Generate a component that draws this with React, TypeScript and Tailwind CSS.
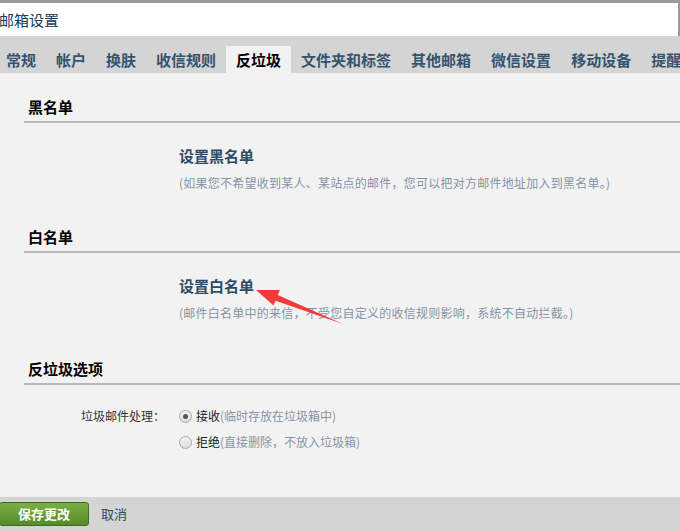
import React from "react";

const tabs = ["常规", "帐户", "换肤", "收信规则", "反垃圾", "文件夹和标签", "其他邮箱", "微信设置", "移动设备", "提醒"];

function Radio({ checked }: { checked?: boolean }) {
  return (
    <span className="w-[13px] h-[13px] rounded-full border border-[#a9a9a9] bg-gradient-to-b from-[#f4f4f4] to-[#dcdcdc] flex items-center justify-center shrink-0">
      {checked && <span className="w-[5px] h-[5px] rounded-full bg-[#555]" />}
    </span>
  );
}

export default function App() {
  const font = { fontFamily: '"Noto Sans CJK SC", "Liberation Sans", sans-serif' };
  return (
    <div className="relative w-[680px] h-[531px] flex flex-col overflow-hidden bg-[#f2f2f2]" style={font}>
      <div className="h-[3px] bg-[#9a9a9a]" />
      <div className="h-[33px] bg-white border-r-2 border-[#9a9a9a] flex items-center">
        <span className="text-[15px] leading-[20px] text-[#1b3a5c] -ml-[1px]">邮箱设置</span>
      </div>
      <div className="h-[37px] bg-[#d4d4d4] flex items-end -ml-[4px] whitespace-nowrap">
        {tabs.map((t) => (
          <div
            key={t}
            className={
              "h-[27px] px-[10px] flex items-center text-[15px] font-bold leading-[20px] " +
              (t === "反垃圾" ? "bg-[#f2f2f2] text-black" : "text-[#34536f]")
            }
          >
            {t}
          </div>
        ))}
      </div>
      <div className="flex-1 pt-[24px]">
        <div className="ml-[24px] pl-[4px] pb-[4px] border-b-2 border-[#b9b9b9] text-[15px] leading-[20px] font-bold text-black">黑名单</div>
        <div className="pl-[179px] mt-[23px]">
          <div className="text-[15px] leading-[20px] font-bold text-[#2c4b69]">设置黑名单</div>
          <div className="mt-[7px] text-[12px] leading-[20px] tracking-[0.25px] text-[#8494a6] whitespace-nowrap">(如果您不希望收到某人、某站点的邮件，您可以把对方邮件地址加入到黑名单。)</div>
        </div>
        <div className="mt-[34px] ml-[24px] pl-[4px] pb-[4px] border-b-2 border-[#b9b9b9] text-[15px] leading-[20px] font-bold text-black">白名单</div>
        <div className="pl-[179px] mt-[23px]">
          <div className="text-[15px] leading-[20px] font-bold text-[#2c4b69]">设置白名单</div>
          <div className="mt-[7px] text-[12px] leading-[20px] tracking-[0.25px] text-[#8494a6] whitespace-nowrap">(邮件白名单中的来信，不受您自定义的收信规则影响，系统不自动拦截。)</div>
        </div>
        <div className="mt-[36px] ml-[24px] pl-[4px] pb-[4px] border-b-2 border-[#b9b9b9] text-[15px] leading-[20px] font-bold text-black">反垃圾选项</div>
        <div className="mt-[21px] flex flex-col gap-[6px] text-[12px] leading-[20px]">
          <div className="flex items-center">
            <span className="w-[165px] text-right text-[#333]">垃圾邮件处理：</span>
            <span className="ml-[14px] flex items-center gap-[4px]">
              <Radio checked />
              <span className="text-[#222]">接收<span className="text-[#8494a6]">(临时存放在垃圾箱中)</span></span>
            </span>
          </div>
          <div className="flex items-center">
            <span className="w-[165px]" />
            <span className="ml-[14px] flex items-center gap-[4px]">
              <Radio />
              <span className="text-[#222]">拒绝<span className="text-[#8494a6]">(直接删除，不放入垃圾箱)</span></span>
            </span>
          </div>
        </div>
      </div>
      <div className="h-[34px] bg-[#d4d4d4] flex items-center">
        <button className="w-[90px] h-[24px] -ml-[1px] rounded-[3px] border border-[#3f6d1f] bg-gradient-to-b from-[#79b043] to-[#568a2a] text-white text-[13px] font-bold leading-[20px] flex items-center justify-center">
          保存更改
        </button>
        <span className="ml-[12px] text-[13px] leading-[20px] text-[#2c4b69]">取消</span>
      </div>
      <svg className="absolute left-0 top-0 pointer-events-none" width="680" height="531" viewBox="0 0 680 531">
        <polygon
          points="256,290 280,290 277.7,295 343,324 275.5,300.8 273.6,305.5"
          fill="#f23a3a"
        />
      </svg>
    </div>
  );
}
